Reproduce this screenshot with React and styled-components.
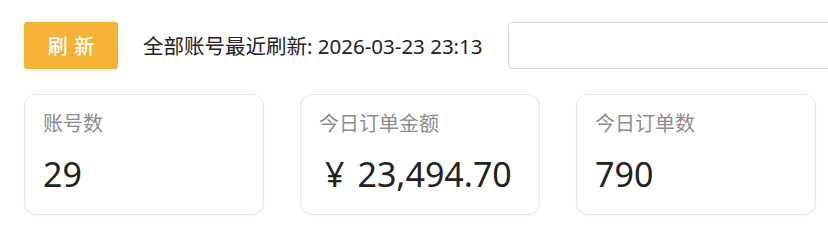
import React from "react";
import styled, { createGlobalStyle } from "styled-components";

const Global = createGlobalStyle`
  html, body { margin: 0; padding: 0; background: #ffffff; }
  body {
    font-family: "Noto Sans", "Noto Sans CJK SC", sans-serif;
    color: #222222;
    overflow: hidden;
  }
`;

const Page = styled.div`
  width: 828px;
  height: 240px;
  overflow: hidden;
  padding: 22px 24px 0 24px;
  box-sizing: border-box;
  display: flex;
  flex-direction: column;
  gap: 25px;
`;

const Toolbar = styled.div`
  display: flex;
  align-items: center;
  gap: 25px;
  white-space: nowrap;
`;

const RefreshButton = styled.button`
  flex: 0 0 94px;
  width: 94px;
  height: 47px;
  border: none;
  border-radius: 3px;
  background: #f5b236;
  color: #ffffff;
  font-family: "Noto Sans CJK SC", sans-serif;
  font-size: 20px;
  font-weight: 500;
  letter-spacing: 1px;
  padding: 0 0 0 1px;
  box-shadow: 0 2px 0 rgba(0, 0, 0, 0.04);
  cursor: pointer;
`;

const Status = styled.span`
  font-size: 20.5px;
  line-height: 28px;
  color: #222222;
`;

const SearchInput = styled.input`
  flex: 0 0 360px;
  height: 47px;
  box-sizing: border-box;
  border: 1px solid #d9d9d9;
  border-radius: 4px;
  padding: 0 12px;
  font-size: 16px;
  outline: none;
`;

const Cards = styled.div`
  display: flex;
  gap: 36px;
`;

const Card = styled.div`
  flex: 0 0 240px;
  width: 240px;
  height: 121px;
  box-sizing: border-box;
  border: 1px solid #e6e6e6;
  border-radius: 12px;
  box-shadow: 0 1px 2px rgba(0, 0, 0, 0.03);
  padding: 15px 18px 0 18px;
  display: flex;
  flex-direction: column;
`;

const Label = styled.div`
  font-size: 20px;
  line-height: 28px;
  color: #8c8c8c;
`;

const Value = styled.div`
  margin-top: 14px;
  font-size: 34px;
  line-height: 44px;
  color: #222222;
`;

const Currency = styled.span`
  margin: 0 13px 0 6px;
`;

const stats = [
  { label: "账号数", value: "29" },
  { label: "今日订单金额", value: "23,494.70", currency: "¥" },
  { label: "今日订单数", value: "790" },
];

export default function App() {
  return (
    <>
      <Global />
      <Page>
        <Toolbar>
          <RefreshButton>刷 新</RefreshButton>
          <Status>全部账号最近刷新: 2026-03-23 23:13</Status>
          <SearchInput />
        </Toolbar>
        <Cards>
          {stats.map((s) => (
            <Card key={s.label}>
              <Label>{s.label}</Label>
              <Value>
                {s.currency && <Currency>{s.currency}</Currency>}
                {s.value}
              </Value>
            </Card>
          ))}
        </Cards>
      </Page>
    </>
  );
}
